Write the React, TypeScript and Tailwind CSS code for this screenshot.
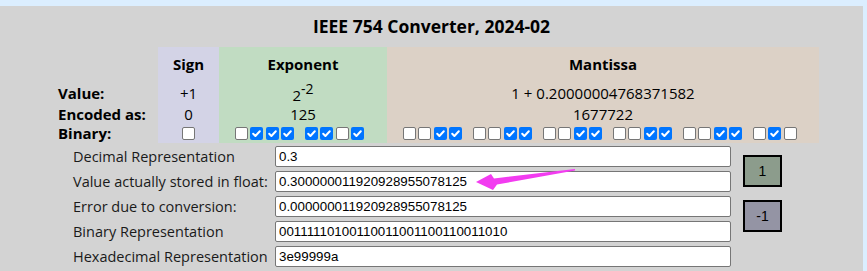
import React from "react";

const sans = { fontFamily: '"Open Sans", "Noto Sans", sans-serif' };
const arial = { fontFamily: '"Liberation Sans", Arial, sans-serif' };

function Box({ on }: { on: boolean }) {
  return on ? (
    <span className="flex h-[13px] w-[13px] items-center justify-center rounded-[2px] bg-[#0075ff]">
      <svg width="13" height="13" viewBox="0 0 13 13">
        <path d="M3.2 6.8 L5.4 9 L9.8 4.3" fill="none" stroke="white" strokeWidth="2" strokeLinecap="round" strokeLinejoin="round" />
      </svg>
    </span>
  ) : (
    <span className="block h-[13px] w-[13px] rounded-[2px] border border-[#767676] bg-white" />
  );
}

function Bits({ bits }: { bits: string }) {
  const groups: string[] = [];
  for (let i = 0; i < bits.length; i += 4) groups.push(bits.slice(i, i + 4));
  return (
    <div className="flex items-center gap-[10.5px]">
      {groups.map((g, gi) => (
        <div key={gi} className="flex items-center gap-[2.5px]">
          {g.split("").map((b, bi) => (
            <Box key={bi} on={b === "1"} />
          ))}
        </div>
      ))}
    </div>
  );
}

const rows: [string, string][] = [
  ["Decimal Representation", "0.3"],
  ["Value actually stored in float:", "0.300000011920928955078125"],
  ["Error due to conversion:", "0.000000011920928955078125"],
  ["Binary Representation", "00111110100110011001100110011010"],
  ["Hexadecimal Representation", "3e99999a"],
];

export default function App() {
  return (
    <div className="relative h-[271px] w-[867px] overflow-hidden bg-[#dbeeff] pr-[4px] pt-[6px]" style={sans}>
      <div className="h-full bg-[#d3d3d3] text-[15px] text-black">
        <div className="flex h-[41px] items-center justify-center text-[17.5px] font-bold">
          IEEE 754 Converter, 2024-02
        </div>
        <div className="pl-[58px]">
          <div className="grid grid-cols-[100px_61px_168px_432px] grid-rows-[35px_22px_20px_19px] leading-none">
            <div />
            <div className="flex items-center justify-center bg-[#d3d3e6] font-bold">Sign</div>
            <div className="flex items-center justify-center bg-[#c1dcc2] font-bold">Exponent</div>
            <div className="flex items-center justify-center bg-[#dcd1c6] font-bold">Mantissa</div>

            <div className="flex items-center font-bold">Value:</div>
            <div className="flex items-center justify-center bg-[#d3d3e6]">+1</div>
            <div className="flex items-center justify-center bg-[#c1dcc2]">
              <span>
                2<sup className="relative top-[-1px] align-super text-[14px] leading-none">-2</sup>
              </span>
            </div>
            <div className="flex items-center justify-center bg-[#dcd1c6]">1 + 0.20000004768371582</div>

            <div className="flex items-center font-bold">Encoded as:</div>
            <div className="flex items-center justify-center bg-[#d3d3e6]">0</div>
            <div className="flex items-center justify-center bg-[#c1dcc2]">125</div>
            <div className="flex items-center justify-center bg-[#dcd1c6]">1677722</div>

            <div className="flex items-center font-bold">Binary:</div>
            <div className="flex items-center justify-center bg-[#d3d3e6]">
              <Box on={false} />
            </div>
            <div className="flex items-center justify-center bg-[#c1dcc2] pr-[7px]">
              <Bits bits="01111101" />
            </div>
            <div className="flex items-center justify-center bg-[#dcd1c6] pr-[7px]">
              <Bits bits="00110011001100110011010" />
            </div>
          </div>
        </div>
        <div className="flex pl-[73px] pt-[3px]">
          <div className="flex flex-col gap-[4px]">
            {rows.map(([label, value]) => (
              <div key={label} className="flex h-[21px] items-center">
                <div className="w-[202px] whitespace-nowrap text-[14.5px] text-[#1a1a1a]">{label}</div>
                <input
                  readOnly
                  value={value}
                  className="h-[21px] w-[456px] rounded-[2px] border border-[#767676] bg-white pl-[3px] text-[13.33px] text-black outline-none"
                  style={arial}
                />
              </div>
            ))}
          </div>
          <div className="ml-[12px] flex flex-col gap-[13px] pt-[9px]" style={arial}>
            <button className="h-[32px] w-[39px] border-2 border-black bg-[#8c9c8c] text-[14px] text-black">1</button>
            <button className="h-[32px] w-[39px] border-2 border-black bg-[#9494a4] text-[14px] text-black">-1</button>
          </div>
        </div>
      </div>
      <svg className="pointer-events-none absolute left-0 top-0" width="867" height="271" viewBox="0 0 867 271">
        <polygon points="476,182 491,174 494,178.5 575,169 575,170.5 497,184.5 493,190" fill="#f23cf0" />
      </svg>
    </div>
  );
}
